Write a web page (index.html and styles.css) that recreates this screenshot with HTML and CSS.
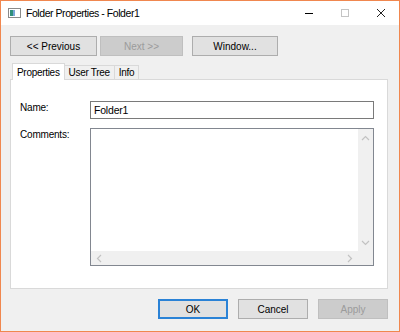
FILE: index.html
```html
<!DOCTYPE html>
<html lang="en">
<head>
<meta charset="UTF-8" />
<title>Folder Properties - Folder1</title>
<link rel="stylesheet" href="styles.css">
</head>
<body>
  <div class="window">
    <div class="titlebar">
      <svg class="app-icon" width="13" height="10" viewBox="0 0 13 10">
        <rect x="0.5" y="0.5" width="12" height="9" fill="#fff" stroke="#8a8a8a"/>
        <rect x="2" y="2" width="3" height="6" fill="#2f8f7a"/>
        <rect x="5" y="2" width="2" height="6" fill="#7aa7d8"/>
      </svg>
      <span class="title">Folder Properties - Folder1</span>
      <div class="caption">
        <span class="cap-btn">
          <svg width="10" height="10" viewBox="0 0 10 10"><path d="M1 5.5h8" stroke="#000" stroke-width="1"/></svg>
        </span>
        <span class="cap-btn">
          <svg width="10" height="10" viewBox="0 0 10 10"><rect x="1.5" y="1.5" width="7" height="7" fill="none" stroke="#c4c4c4"/></svg>
        </span>
        <span class="cap-btn">
          <svg width="10" height="10" viewBox="0 0 10 10"><path d="M1 1l8 8M9 1l-8 8" stroke="#222" stroke-width="1"/></svg>
        </span>
      </div>
    </div>

    <div class="content">
      <div class="nav-row">
        <button class="btn prev">&lt;&lt; Previous</button>
        <button class="btn next" disabled>Next &gt;&gt;</button>
        <button class="btn win">Window...</button>
      </div>

      <div class="tabs">
        <span class="tab active">Properties</span>
        <span class="tab">User Tree</span>
        <span class="tab">Info</span>
      </div>

      <div class="tab-panel">
        <div class="field">
          <label class="lbl">Name:</label>
          <div class="textbox">Folder1</div>
        </div>
        <div class="field">
          <label class="lbl">Comments:</label>
          <div class="memo">
            <div class="memo-text"></div>
            <div class="vscroll">
              <svg width="9" height="6" viewBox="0 0 9 6"><path d="M1 5l3.5-3.5L8 5" fill="none" stroke="#c2c2c2" stroke-width="1.2"/></svg>
              <svg width="9" height="6" viewBox="0 0 9 6"><path d="M1 1l3.5 3.5L8 1" fill="none" stroke="#c2c2c2" stroke-width="1.2"/></svg>
            </div>
            <div class="hscroll">
              <svg width="6" height="9" viewBox="0 0 6 9"><path d="M5 1L1.5 4.5 5 8" fill="none" stroke="#c2c2c2" stroke-width="1.2"/></svg>
              <svg width="6" height="9" viewBox="0 0 6 9"><path d="M1 1l3.5 3.5L1 8" fill="none" stroke="#c2c2c2" stroke-width="1.2"/></svg>
            </div>
            <div class="corner"></div>
          </div>
        </div>
      </div>

      <div class="dialog-buttons">
        <button class="btn dlg default">OK</button>
        <button class="btn dlg">Cancel</button>
        <button class="btn dlg" disabled>Apply</button>
      </div>
    </div>
  </div>
</body>
</html>
```

FILE: styles.css
```css
body {
  margin: 0; padding: 0;
  font-family: "Liberation Sans", Arial, sans-serif;
  font-size: 10px;
  color: #000;
}
.window {
  width: 400px;
  height: 332px;
  box-sizing: border-box;
  border: 1px solid #f0874f;
  background: #f0f0f0;
  display: flex;
  flex-direction: column;
}
.titlebar {
  height: 24px;
  background: #fff;
  display: flex;
  align-items: center;
}
.app-icon {
  margin-left: 7px;
  margin-right: 5px;
}
.title {
  font-size: 10.5px;
  letter-spacing: -0.45px;
  flex: 1;
}
.caption {
  display: flex;
  height: 24px;
}
.cap-btn {
  width: 36px;
  display: flex;
  align-items: center;
  justify-content: center;
}
.content {
  flex: 1;
  padding: 11px 11px 0 9px;
  display: flex;
  flex-direction: column;
}
.nav-row {
  display: flex;
  height: 20px;
}
.btn {
  font-family: inherit;
  font-size: 10px;
  color: #000;
  background: #e1e1e1;
  border: 1px solid #adadad;
  padding: 0;
  height: 20px;
  box-sizing: border-box;
}
.btn:disabled {
  background: #cccccc;
  border-color: #bfbfbf;
  color: #9b9b9b;
}
.prev { width: 87px; }
.next { width: 83px; margin-left: 3px; }
.win { width: 86px; margin-left: 9px; }
.tabs {
  display: flex;
  align-items: flex-end;
  margin-top: 7px;
  height: 16px;
  padding-left: 2px;
  position: relative;
  z-index: 1;
}
.tab {
  height: 14px;
  box-sizing: border-box;
  border: 1px solid #d9d9d9;
  border-bottom: none;
  border-left: none;
  background: #f0f0f0;
  padding: 0 4px;
  line-height: 13px;
  letter-spacing: -0.3px;
}
.tab.active {
  height: 17px;
  margin-bottom: -1px;
  background: #fff;
  border-left: 1px solid #d9d9d9;
  padding: 2px 4px 0 4px;
}
.tab-panel {
  height: 210px;
  box-sizing: border-box;
  border: 1px solid #d9d9d9;
  background: #fff;
  padding: 21px 13px 0 9px;
  display: flex;
  flex-direction: column;
  gap: 9px;
}
.field {
  display: flex;
  align-items: flex-start;
}
.lbl {
  width: 70px;
  line-height: 13px;
  letter-spacing: -0.2px;
}
.textbox {
  flex: 1;
  height: 18px;
  box-sizing: border-box;
  border: 1px solid #7a7a7a;
  padding-left: 3px;
  line-height: 16px;
  font-size: 10.5px;
  letter-spacing: -0.2px;
}
.memo {
  flex: 1;
  height: 138px;
  box-sizing: border-box;
  border: 1px solid #828790;
  display: grid;
  grid-template-columns: 1fr 15px;
  grid-template-rows: 1fr 14px;
}
.vscroll {
  background: #f0f0f0;
  display: flex;
  flex-direction: column;
  justify-content: space-between;
  align-items: center;
  padding: 6px 0 5px;
}
.hscroll {
  background: #f0f0f0;
  display: flex;
  justify-content: space-between;
  align-items: center;
  padding: 0 5px 0 5px;
}
.corner {
  background: #f0f0f0;
}
.dialog-buttons {
  display: flex;
  justify-content: flex-end;
  gap: 10px;
  margin-top: 10px;
}
.dlg { width: 70px; }
.btn.default {
  border: 2px solid #2a82d6;
}
```
